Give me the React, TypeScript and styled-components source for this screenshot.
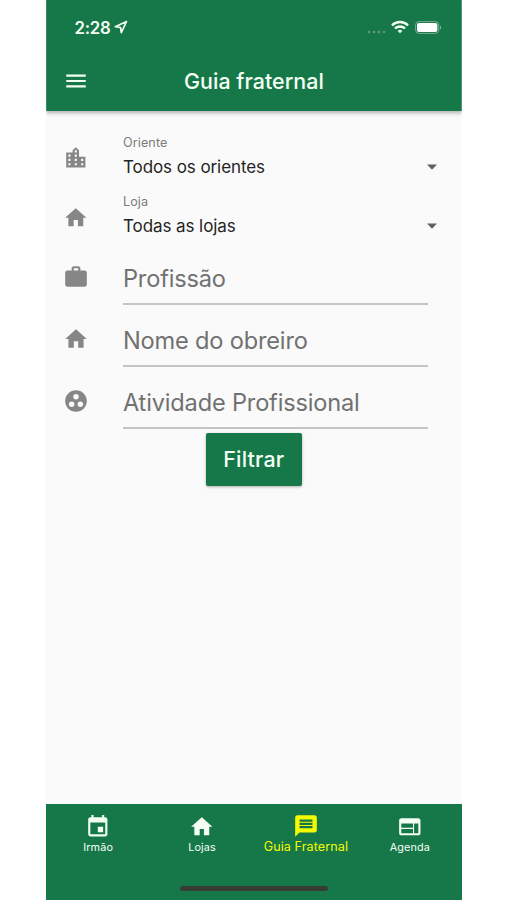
import React from "react";
import styled, { createGlobalStyle } from "styled-components";
import {
  MdEvent,
  MdGroupWork,
  MdHome,
  MdLocationCity,
  MdMenu,
  MdMessage,
  MdWeb,
  MdWork,
} from "react-icons/md";
import type { IconType } from "react-icons";

const green = "#167849";

const GlobalStyle = createGlobalStyle`
  * { box-sizing: border-box; }
  body { margin: 0; background: #fff; font-family: Inter, "Liberation Sans", sans-serif; }
  svg { display: block; flex: none; }
`;

const Stage = styled.div`
  width: 507px;
  height: 900px;
  padding: 0 45.3px 0 46.2px;
  overflow: hidden;
`;

const Phone = styled.div`
  height: 900px;
  display: flex;
  flex-direction: column;
  background: #fafafa;
`;

const Header = styled.header`
  height: 110.5px;
  flex: none;
  background: ${green};
  color: #f4fff4;
  box-shadow: 0 2px 4px rgba(0, 0, 0, 0.3);
  clip-path: inset(0 0 -12px 0);
`;

const StatusBar = styled.div`
  height: 54px;
  padding: 0 19.5px 0 28.3px;
  display: flex;
  align-items: center;
`;

const Clock = styled.span`
  font-size: 16.8px;
  font-weight: 600;
  line-height: 20px;
  letter-spacing: -0.25px;
  margin: 1px 3.3px 0 0;
`;

const StatusIcons = styled.div`
  margin-left: auto;
  display: flex;
  align-items: center;
`;

const TitleBar = styled.div`
  height: 54px;
  padding: 0 16.5px;
  display: grid;
  grid-template-columns: 26px 1fr 26px;
  align-items: center;
`;

const Title = styled.h1`
  margin: 0;
  text-align: center;
  font-size: 21.4px;
  font-weight: 500;
  line-height: 26px;
  letter-spacing: 0.06px;
`;

const Form = styled.main`
  flex: 1;
  padding: 22.5px 34px 0 17px;
`;

const Fields = styled.div`
  display: grid;
  row-gap: 5.5px;
`;

const Row = styled.div<{ $height: number; $drop: number }>`
  height: ${(p) => p.$height}px;
  display: grid;
  grid-template-columns: 26px 1fr;
  column-gap: 33.8px;

  > svg {
    color: #868686;
    margin-top: ${(p) => p.$drop}px;
  }
`;

const Select = styled.div`
  padding-top: 0.8px;
  display: grid;
  grid-template-columns: 1fr 10px;
  align-items: center;
  align-content: start;
  margin-right: -9px;
`;

const SelectLabel = styled.span`
  grid-column: 1 / -1;
  font-size: 12.6px;
  line-height: 18px;
  letter-spacing: 0.1px;
  color: #7b7b7b;
`;

const SelectValue = styled.span`
  font-size: 17px;
  line-height: 30px;
  letter-spacing: -0.08px;
  color: #242424;
`;

const Field = styled.div`
  height: 53px;
  border-bottom: 2px solid #c4c4c4;
  font-size: 23.6px;
  line-height: 53px;
  letter-spacing: -0.18px;
  color: #717171;
  white-space: nowrap;
`;

const SubmitRow = styled.div`
  display: flex;
  padding-left: 142.6px;
`;

const Submit = styled.button`
  width: 96px;
  height: 53.5px;
  padding: 0;
  border: 0;
  border-radius: 2px;
  background: ${green};
  color: #f4fff4;
  box-shadow: 0 1px 3px rgba(0, 0, 0, 0.3);
  font: 500 21.4px/26px Inter, "Liberation Sans", sans-serif;
  letter-spacing: 0.2px;
`;

const BottomBar = styled.footer`
  height: 96px;
  flex: none;
  background: ${green};
  display: flex;
  flex-direction: column;
`;

const Tabs = styled.nav`
  height: 82px;
  display: grid;
  grid-template-columns: repeat(4, 1fr);
`;

const Tab = styled.div<{ $active?: boolean }>`
  padding-top: ${(p) => (p.$active ? 9 : 10)}px;
  display: flex;
  flex-direction: column;
  align-items: center;
  color: ${(p) => (p.$active ? "#f4fb00" : "#f4fff4")};
  white-space: nowrap;
`;

const TabLabel = styled.span<{ $active?: boolean }>`
  font-size: ${(p) => (p.$active ? 12.6 : 10.8)}px;
  line-height: 16px;
  letter-spacing: ${(p) => (p.$active ? 0.08 : 0.12)}px;
`;

const HomeIndicator = styled.div`
  width: 148px;
  height: 5px;
  border-radius: 3px;
  background: #383c35;
  align-self: center;
`;

const LocationArrow = () => (
  <svg width="14" height="14" viewBox="0 0 14 14" fill="none" stroke="currentColor" strokeWidth="1.7" strokeLinejoin="round">
    <path d="M12.5 1.5 1.3 6.7l5.2.8.8 5.2z" />
  </svg>
);

const SignalDots = () => (
  <svg width="19" height="4" viewBox="0 0 19 4" fill="#fff" opacity="0.28">
    <circle cx="2" cy="2" r="1.3" />
    <circle cx="7" cy="2" r="1.3" />
    <circle cx="12" cy="2" r="1.3" />
    <circle cx="17" cy="2" r="1.3" />
  </svg>
);

const Wifi = () => (
  <svg width="18" height="14" viewBox="0 0 18 14" fill="none" stroke="currentColor" strokeWidth="2.4">
    <path d="M1 5.3a11.5 11.5 0 0 1 16 0M4 8.5a7.2 7.2 0 0 1 10 0" />
    <path d="M9 13.2 6.6 10.8a3.5 3.5 0 0 1 4.8 0z" fill="currentColor" stroke="none" />
  </svg>
);

const Battery = () => (
  <svg width="27" height="13" viewBox="0 0 27 13" fill="none">
    <rect x=".6" y=".6" width="23.2" height="11.8" rx="3.4" stroke="#fff" strokeOpacity="0.4" />
    <rect x="2" y="2" width="20.4" height="9" rx="2" fill="#fff" />
    <path d="M25 4.5c1.6.5 1.6 3.5 0 4z" fill="#fff" fillOpacity="0.45" />
  </svg>
);

const Caret = () => (
  <svg width="10" height="6" viewBox="0 0 10 6" fill="#606060">
    <path d="M0 .5h10L5 5.7z" />
  </svg>
);

const DotsSlot = styled.div`
  margin: 9px 5.5px 0 0;
`;

const WifiSlot = styled.div`
  margin: 0 6px 1px 0;
`;

const selects: { icon: IconType; label: string; value: string; drop: number }[] = [
  { icon: MdLocationCity, label: "Oriente", value: "Todos os orientes", drop: 11.5 },
  { icon: MdHome, label: "Loja", value: "Todas as lojas", drop: 12 },
];

const fields: { icon: IconType; label: string }[] = [
  { icon: MdWork, label: "Profissão" },
  { icon: MdHome, label: "Nome do obreiro" },
  { icon: MdGroupWork, label: "Atividade Profissional" },
];

const tabs: { icon: IconType; label: string; active?: boolean }[] = [
  { icon: MdEvent, label: "Irmão" },
  { icon: MdHome, label: "Lojas" },
  { icon: MdMessage, label: "Guia Fraternal", active: true },
  { icon: MdWeb, label: "Agenda" },
];

export default function App() {
  return (
    <>
      <GlobalStyle />
      <Stage>
        <Phone>
          <Header>
            <StatusBar>
              <Clock>2:28</Clock>
              <LocationArrow />
              <StatusIcons>
                <DotsSlot><SignalDots /></DotsSlot>
                <WifiSlot><Wifi /></WifiSlot>
                <Battery />
              </StatusIcons>
            </StatusBar>
            <TitleBar>
              <MdMenu size={26} />
              <Title>Guia fraternal</Title>
            </TitleBar>
          </Header>
          <Form>
            {selects.map(({ icon: Icon, label, value, drop }) => (
              <Row key={label} $height={59.6} $drop={drop}>
                <Icon size={25.6} />
                <Select>
                  <SelectLabel>{label}</SelectLabel>
                  <SelectValue>{value}</SelectValue>
                  <Caret />
                </Select>
              </Row>
            ))}
            <Fields>
              {fields.map(({ icon: Icon, label }) => (
                <Row key={label} $height={56.5} $drop={11.5}>
                  <Icon size={26} />
                  <Field>{label}</Field>
                </Row>
              ))}
            </Fields>
            <SubmitRow>
              <Submit>Filtrar</Submit>
            </SubmitRow>
          </Form>
          <BottomBar>
            <Tabs>
              {tabs.map(({ icon: Icon, label, active }) => (
                <Tab key={label} $active={active}>
                  <Icon size={active ? 26 : 25.6} />
                  <TabLabel $active={active}>{label}</TabLabel>
                </Tab>
              ))}
            </Tabs>
            <HomeIndicator />
          </BottomBar>
        </Phone>
      </Stage>
    </>
  );
}
